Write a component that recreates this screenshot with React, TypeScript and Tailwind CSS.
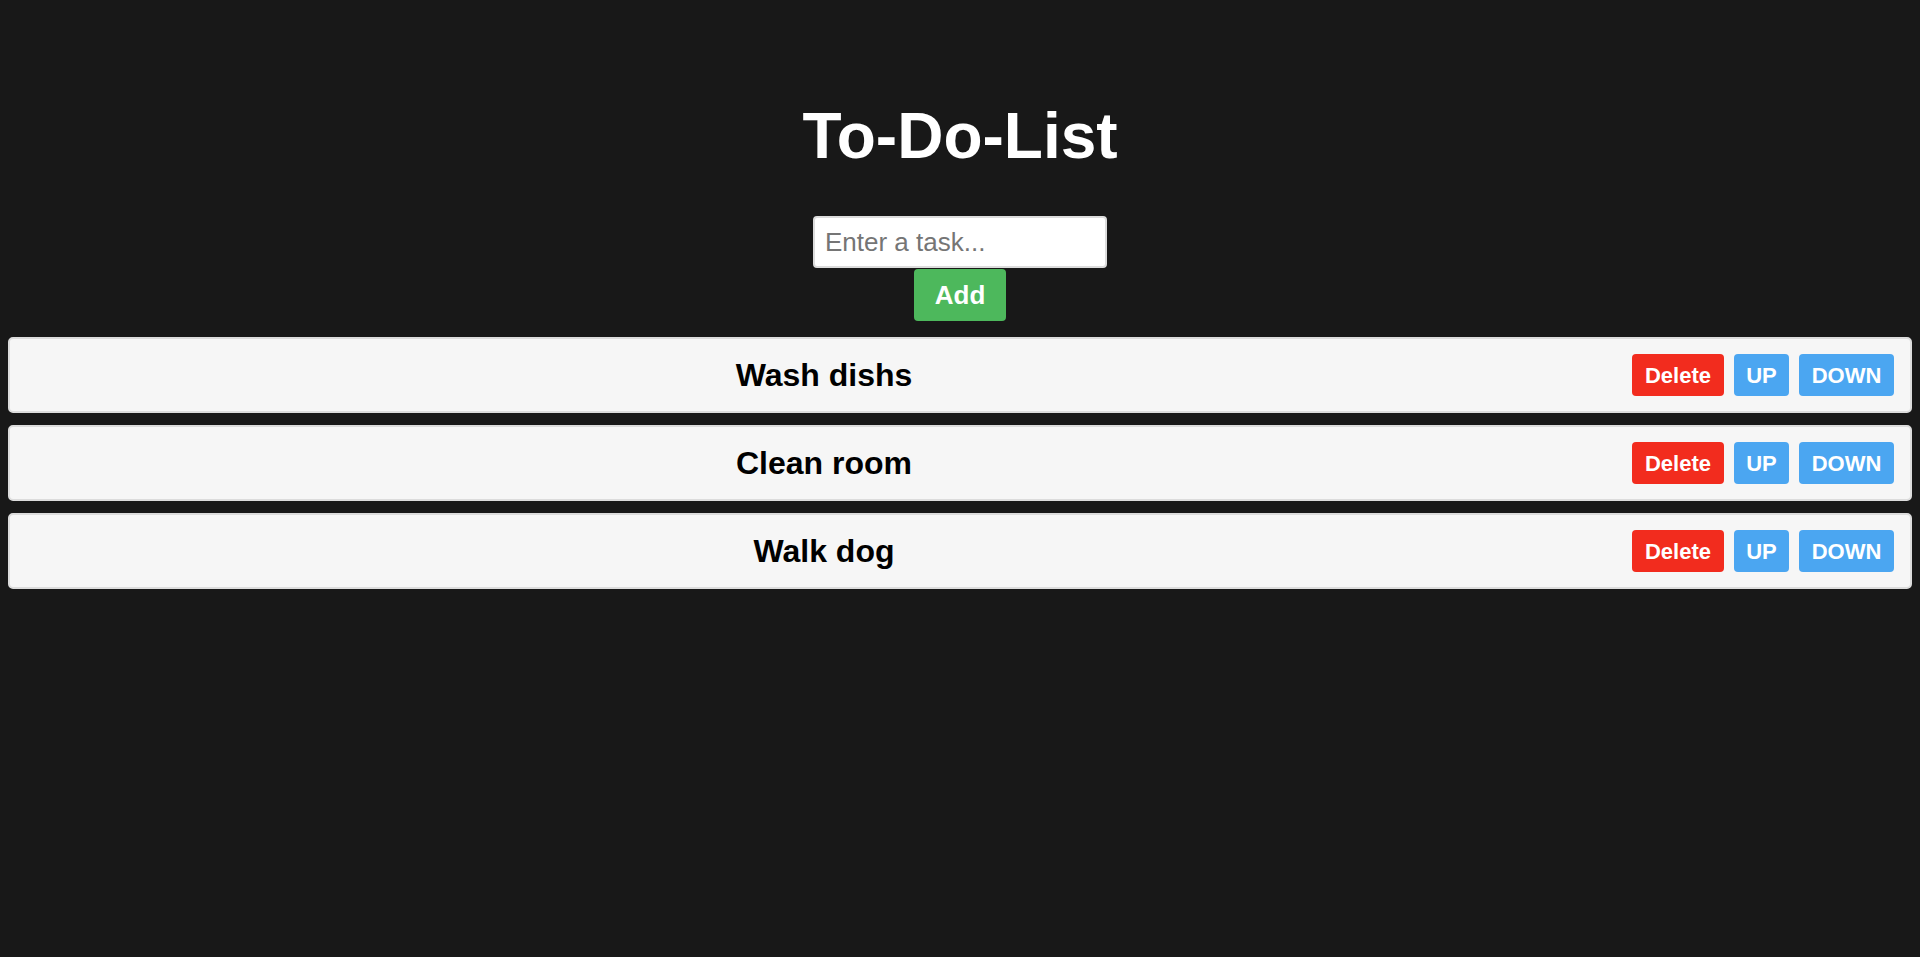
import { useState } from 'react'

type Task = { id: number; text: string }

export default function App() {
  const [tasks, setTasks] = useState<Task[]>([
    { id: 1, text: 'Wash dishs' },
    { id: 2, text: 'Clean room' },
    { id: 3, text: 'Walk dog' },
  ])
  const [value, setValue] = useState('')

  const addTask = () => {
    if (!value.trim()) return
    setTasks([...tasks, { id: Date.now(), text: value }])
    setValue('')
  }

  const deleteTask = (i: number) => {
    setTasks(tasks.filter((_, idx) => idx !== i))
  }

  const move = (i: number, dir: number) => {
    const j = i + dir
    if (j < 0 || j >= tasks.length) return
    const next = [...tasks]
    ;[next[i], next[j]] = [next[j], next[i]]
    setTasks(next)
  }

  return (
    <div className="min-h-screen bg-[#181818] font-['Liberation_Sans',Arial,sans-serif] pt-[100px]">
      <h1 className="text-center text-white font-bold text-[64px] leading-[72px]">To-Do-List</h1>

      <div className="flex flex-col items-center mt-[44px]">
        <input
          value={value}
          onChange={(e) => setValue(e.target.value)}
          placeholder="Enter a task..."
          className="w-[294px] h-[52px] bg-white border-2 border-[#dcdcdc] rounded-[4px] px-[10px] text-[26px] text-black placeholder:text-[#757575] outline-none"
        />
        <button
          onClick={addTask}
          className="mt-px w-[92px] h-[52px] bg-[#4db85c] text-white font-bold text-[26px] rounded-[4px]"
        >
          Add
        </button>
      </div>

      <ol className="mt-[16px] px-2 flex flex-col gap-[12px]">
        {tasks.map((task, i) => (
          <li
            key={task.id}
            className="flex items-center gap-[10px] h-[76px] px-4 bg-[#f6f6f6] border-2 border-[#dcdcdc] rounded-[5px]"
          >
            <span className="flex-1 text-center text-black font-bold text-[32px]">{task.text}</span>
            <div className="flex items-center gap-[10px]">
              <button
                onClick={() => deleteTask(i)}
                className="h-[42px] px-[13px] bg-[#f22c1e] text-white font-bold text-[22px] rounded-[4px]"
              >
                Delete
              </button>
              <button
                onClick={() => move(i, -1)}
                className="h-[42px] w-[55px] bg-[#4ba6f1] text-white font-bold text-[22px] rounded-[4px]"
              >
                UP
              </button>
              <button
                onClick={() => move(i, 1)}
                className="h-[42px] w-[95px] bg-[#4ba6f1] text-white font-bold text-[22px] rounded-[4px]"
              >
                DOWN
              </button>
            </div>
          </li>
        ))}
      </ol>
    </div>
  )
}
